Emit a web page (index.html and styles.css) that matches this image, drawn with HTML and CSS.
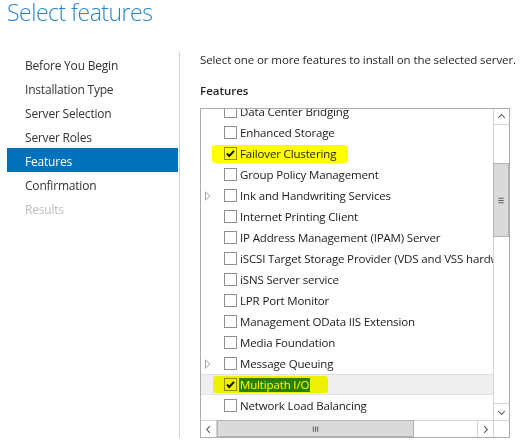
FILE: index.html
```html
<!DOCTYPE html>
<html>
<head>
<meta charset="utf-8">
<link rel="stylesheet" href="styles.css">
</head>
<body>
<div class="page">
  <h1 class="title">Select features</h1>
  <div class="main">
    <nav class="nav">
      <div class="nav-item">Before You Begin</div>
      <div class="nav-item">Installation Type</div>
      <div class="nav-item">Server Selection</div>
      <div class="nav-item">Server Roles</div>
      <div class="nav-item active">Features</div>
      <div class="nav-item">Confirmation</div>
      <div class="nav-item disabled">Results</div>
    </nav>
    <section class="content">
      <p class="intro">Select one or more features to install on the selected server.</p>
      <p class="heading">Features</p>
      <div class="listbox">
        <div class="viewport">
          <div class="rows">
            <div class="row"><span class="exp"></span><span class="cb"></span><span class="label">Data Center Bridging</span></div>
            <div class="row"><span class="exp"></span><span class="cb"></span><span class="label">Enhanced Storage</span></div>
            <div class="row"><span class="exp"></span><span class="cb checked"><svg viewBox="0 0 13 13"><path d="M3 6.5 L5.3 9 L10 3.8" fill="none" stroke="#111" stroke-width="2"/></svg></span><span class="label">Failover Clustering</span></div>
            <div class="row"><span class="exp"></span><span class="cb"></span><span class="label">Group Policy Management</span></div>
            <div class="row"><span class="exp"><svg viewBox="0 0 6 10"><path d="M0.5 0.8 L5 5 L0.5 9.2 Z" fill="none" stroke="#a6a6a6"/></svg></span><span class="cb"></span><span class="label">Ink and Handwriting Services</span></div>
            <div class="row"><span class="exp"></span><span class="cb"></span><span class="label">Internet Printing Client</span></div>
            <div class="row"><span class="exp"></span><span class="cb"></span><span class="label">IP Address Management (IPAM) Server</span></div>
            <div class="row"><span class="exp"></span><span class="cb"></span><span class="label">iSCSI Target Storage Provider (VDS and VSS hardware providers)</span></div>
            <div class="row"><span class="exp"></span><span class="cb"></span><span class="label">iSNS Server service</span></div>
            <div class="row"><span class="exp"></span><span class="cb"></span><span class="label">LPR Port Monitor</span></div>
            <div class="row"><span class="exp"></span><span class="cb"></span><span class="label">Management OData IIS Extension</span></div>
            <div class="row"><span class="exp"></span><span class="cb"></span><span class="label">Media Foundation</span></div>
            <div class="row"><span class="exp"><svg viewBox="0 0 6 10"><path d="M0.5 0.8 L5 5 L0.5 9.2 Z" fill="none" stroke="#a6a6a6"/></svg></span><span class="cb"></span><span class="label">Message Queuing</span></div>
            <div class="row selected"><span class="exp"></span><span class="cb checked"><svg viewBox="0 0 13 13"><path d="M3 6.5 L5.3 9 L10 3.8" fill="none" stroke="#111" stroke-width="2"/></svg></span><span class="label">Multipath I/O</span></div>
            <div class="row"><span class="exp"></span><span class="cb"></span><span class="label">Network Load Balancing</span></div>
            <div class="row"><span class="exp"></span><span class="cb"></span><span class="label">Peer Name Resolution Protocol</span></div>
          </div>
        </div>
        <div class="vscroll">
          <div class="sbtn up"><svg viewBox="0 0 16 16"><path d="M4.5 9.5 L8 6 L11.5 9.5" fill="none" stroke="#606060" stroke-width="1.2"/></svg></div>
          <div class="vtrack">
            <div class="vthumb"><svg viewBox="0 0 16 10" class="grip"><path d="M5 2.5 H11 M5 5 H11 M5 7.5 H11" stroke="#606060" stroke-width="1.2"/></svg></div>
          </div>
          <div class="sbtn down"><svg viewBox="0 0 16 16"><path d="M4.5 6.5 L8 10 L11.5 6.5" fill="none" stroke="#606060" stroke-width="1.2"/></svg></div>
        </div>
        <div class="hscroll">
          <div class="sbtn left"><svg viewBox="0 0 16 16"><path d="M9.5 4.5 L6 8 L9.5 11.5" fill="none" stroke="#606060" stroke-width="1.2"/></svg></div>
          <div class="htrack">
            <div class="hthumb"><svg viewBox="0 0 10 16" class="grip"><path d="M2.5 5 V11 M5 5 V11 M7.5 5 V11" stroke="#606060" stroke-width="1.2"/></svg></div>
          </div>
          <div class="sbtn right"><svg viewBox="0 0 16 16"><path d="M6.5 4.5 L10 8 L6.5 11.5" fill="none" stroke="#606060" stroke-width="1.2"/></svg></div>
        </div>
        <div class="corner"></div>
      </div>
    </section>
  </div>
  <span class="marker m1"></span>
  <span class="marker m2"></span>
</div>
</body>
</html>
```

FILE: styles.css
```css
* { box-sizing: border-box; }
html, body { margin: 0; padding: 0; background: #fff; }
body {
  font-family: "Open Sans", "Noto Sans", sans-serif;
  font-size: 11.5px;
  color: #262626;
  width: 521px;
  height: 444px;
  overflow: hidden;
}
.page { position: relative; width: 521px; height: 444px; }
.title {
  margin: 0;
  padding: 1px 0 0 7px;
  height: 27px;
  font-size: 23px;
  font-weight: 300;
  line-height: 22px;
  color: #2a86c2;
  letter-spacing: -0.5px;
}
.main {
  display: flex;
  margin-top: 25px;
}
.nav {
  width: 180px;
  height: 386px;
  padding-left: 7px;
  padding-right: 1px;
  border-right: 1px solid #d3d3d3;
}
.nav-item {
  height: 24px;
  padding-top: 3px;
  line-height: 21px;
  padding-left: 18px;
  font-size: 12px;
  color: #333;
  letter-spacing: -0.2px;
}
.nav-item.active { background: #0072bb; color: #fff; }
.nav-item.disabled { color: #bdbdbd; }
.content { padding-left: 20px; }
.intro {
  margin: 0;
  line-height: 16px;
  letter-spacing: -0.1px;
  color: #262626;
  white-space: nowrap;
}
.heading {
  margin: 15px 0 0;
  line-height: 16px;
  font-weight: 600;
  color: #262626;
}
.listbox {
  margin-top: 9px;
  width: 310px;
  height: 330px;
  border: 1px solid #ababab;
  display: grid;
  grid-template-columns: 292px 16px;
  grid-template-rows: 311px 17px;
}
.viewport { overflow: hidden; position: relative; }
.rows { margin-top: -8px; }
.row {
  height: 21px;
  display: flex;
  align-items: center;
  white-space: nowrap;
}
.row.selected {
  background: #efefef;
  border-top: 1px solid #e0e0e0;
  border-bottom: 1px solid #e0e0e0;
}
.exp {
  width: 23px;
  flex: none;
  display: flex;
  padding-left: 4px;
}
.exp svg { width: 6px; height: 10px; display: block; }
.cb {
  flex: none;
  width: 13px;
  height: 13px;
  border: 1px solid #8f8f8f;
  background: transparent;
  position: relative;
}
.cb svg { position: absolute; left: -1px; top: -1px; width: 13px; height: 13px; }
.label {
  margin-left: 3px;
  line-height: 14px;
  letter-spacing: -0.15px;
  color: #1a1a1a;
}
.row.selected .label { background: #2a80cc; color: #fff; padding: 0 1px; margin-left: 2px; }
.vscroll {
  border-left: 1px solid #d4d4d4;
  display: flex;
  flex-direction: column;
}
.sbtn {
  flex: none;
  width: 15px;
  height: 16px;
  display: flex;
  align-items: center;
  justify-content: center;
}
.sbtn svg { width: 15px; height: 15px; }
.sbtn.up { border-bottom: 1px solid #d4d4d4; }
.sbtn.down { border-top: 1px solid #d4d4d4; height: 17px; }
.vtrack { flex: 1; padding-top: 38px; }
.vthumb {
  height: 74px;
  margin-left: -1px;
  width: 16px;
  background: #dadada;
  border: 1px solid #b3b3b3;
  display: flex;
  align-items: center;
  justify-content: center;
}
.vthumb .grip { width: 14px; height: 9px; }
.hscroll {
  border-top: 1px solid #d4d4d4;
  display: flex;
}
.sbtn.left { width: 16px; border-right: 1px solid #d4d4d4; }
.sbtn.right { width: 16px; border-left: 1px solid #d4d4d4; }
.htrack { flex: 1; }
.hthumb {
  width: 197px;
  height: 17px;
  margin-top: -1px;
  background: #dadada;
  border: 1px solid #b3b3b3;
  display: flex;
  align-items: center;
  justify-content: center;
}
.hthumb .grip { width: 9px; height: 14px; }
.corner { border-top: 1px solid #d4d4d4; border-left: 1px solid #d4d4d4; }
.marker {
  position: absolute;
  background: #ffff00;
  mix-blend-mode: multiply;
  border-radius: 3px;
}
.m1 { left: 212px; top: 145px; width: 136px; height: 18px; }
.m2 { left: 213px; top: 376px; width: 115px; height: 17px; }
```
